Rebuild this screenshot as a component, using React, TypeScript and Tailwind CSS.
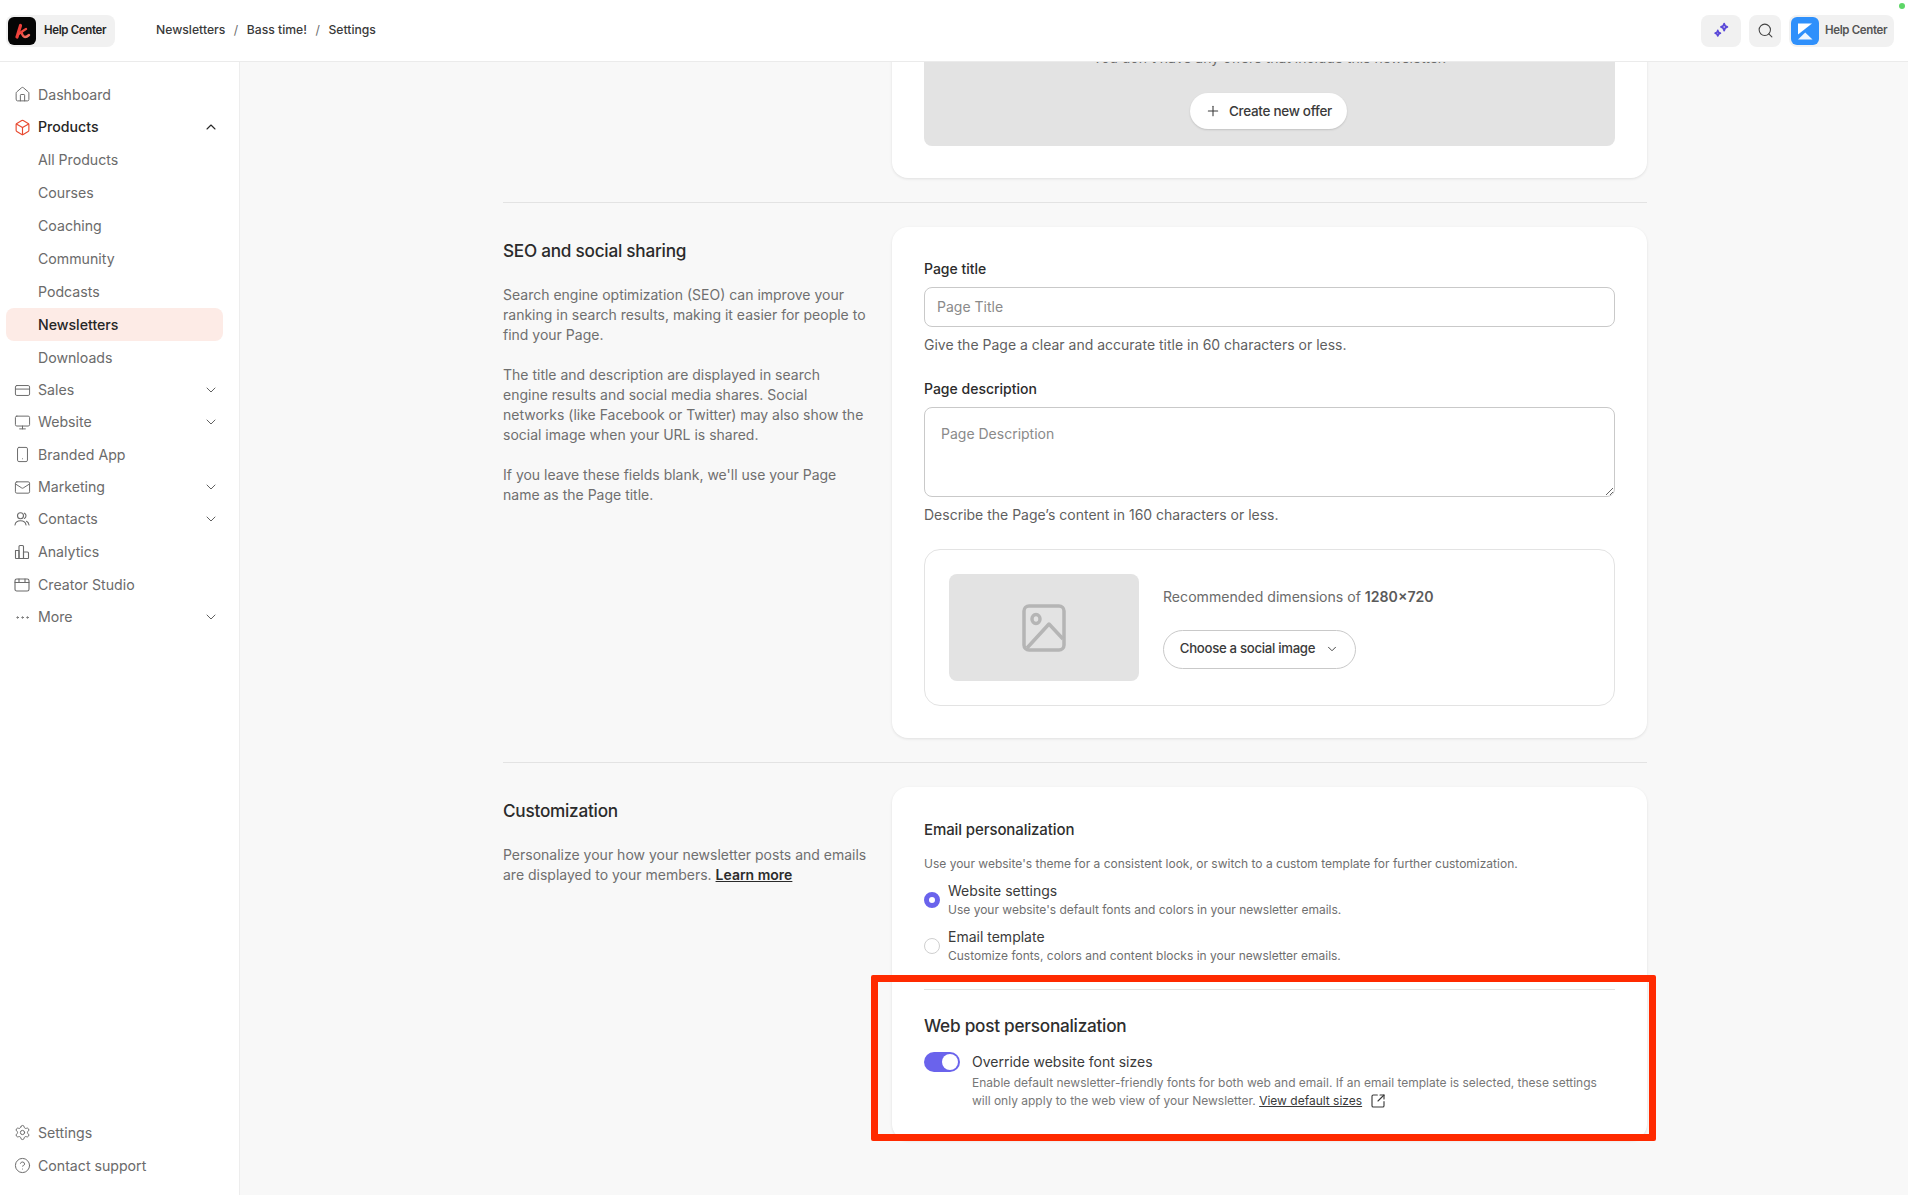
import React from 'react';
import {
  Box,
  ChevronDown,
  ChevronUp,
  CircleHelp,
  CreditCard,
  Ellipsis,
  House,
  Mail,
  Monitor,
  Plus,
  Search,
  Settings,
  Smartphone,
  SquareArrowOutUpRight,
} from 'lucide-react';

const inter = 'font-[Inter,sans-serif]';

function ContactsIcon() {
  return (
    <svg viewBox="0 0 16 16" className="w-[16px] h-[16px]" fill="none" stroke="currentColor" strokeWidth="1.1" strokeLinecap="round">
      <circle cx="6.5" cy="4.8" r="3" />
      <path d="M10.5 2.2a3 3 0 0 1 0 5.2" />
      <path d="M1 14c.4-2.6 2.6-4.2 5.5-4.2S11.600 11.400 12 14" />
      <path d="M12.500 10.300c1.300.6 2.200 1.900 2.500 3.700" />
    </svg>
  );
}

function AnalyticsIcon() {
  return (
    <svg viewBox="0 0 16 16" className="w-[16px] h-[16px]" fill="none" stroke="currentColor" strokeWidth="1.1" strokeLinejoin="round">
      <path d="M1.500 6.500h3.500v8H2a.5.5 0 0 1-.5-.5z" />
      <path d="M5 2.500a1 1 0 0 1 1-1h2.500a1 1 0 0 1 1 1v12H5z" />
      <path d="M9.500 8h4a1 1 0 0 1 1 1v5a.5.5 0 0 1-.5.5H9.500z" />
    </svg>
  );
}

function StudioIcon() {
  return (
    <svg viewBox="0 0 16 16" className="w-[16px] h-[16px]" fill="none" stroke="currentColor" strokeWidth="1.1" strokeLinecap="round">
      <rect x="1" y="2" width="14" height="12" rx="1.800" />
      <path d="M1 5.500h14M5 2v3.500M11 2v3.500" />
    </svg>
  );
}

function KajabiMark() {
  return (
    <svg viewBox="0 0 28 28" className="w-[28px] h-[28px]" fill="none" strokeLinecap="round">
      <defs>
        <linearGradient id="kmark" x1="0" y1="0" x2="1" y2="1">
          <stop offset="0" stopColor="#f0413a" />
          <stop offset="1" stopColor="#f47a6a" />
        </linearGradient>
      </defs>
      <rect width="28" height="28" rx="6" fill="#050505" />
      <path d="M12.500 8.500 9 20" stroke="#ee3f3a" strokeWidth="3.200" />
      <path d="M10.500 17c2.500-1.500 4.500-3.500 7.500-5" stroke="#ee4a40" strokeWidth="2.400" />
      <path d="M13.500 15.500c.8 2.500 1.500 4.500 3.500 4.500 1.500 0 2.700-.8 4-2" stroke="url(#kmark)" strokeWidth="2.400" />
    </svg>
  );
}

function SiteMark() {
  return (
    <svg viewBox="0 0 28 28" className="w-[28px] h-[28px]">
      <rect width="28" height="28" rx="6" fill="#2f90fb" />
      <path d="M7 6.500h14L7 17.500z" fill="#fff" />
      <path d="M7 22.500 14.200 15.500l7.300 7z" fill="#fff" opacity="0.92" />
    </svg>
  );
}

function SparkleIcon() {
  return (
    <svg viewBox="0 0 16 16" className="w-[17px] h-[17px]" fill="none" stroke="#5a48d8" strokeWidth="1.700" strokeLinejoin="round">
      <path d="M10.500 1.500c.3 1.900 1 2.700 3 3.200-2 .5-2.700 1.300-3 3.300-.3-2-1-2.800-3-3.300 2-.5 2.700-1.300 3-3.200z" />
      <path d="M4.500 8c.2 1.500.8 2.100 2.400 2.500-1.600.4-2.200 1-2.400 2.500-.2-1.500-.8-2.100-2.400-2.500 1.600-.4 2.200-1 2.400-2.500z" />
    </svg>
  );
}

function PictureIcon() {
  return (
    <svg viewBox="0 0 44 48" className="w-[44px] h-[48px]" fill="none" stroke="#b5b5b5" strokeWidth="3.500" strokeLinejoin="round">
      <rect x="2" y="2" width="40" height="44" rx="5" />
      <ellipse cx="14" cy="15" rx="4" ry="4.500" />
      <path d="M5 44 27 20l14 15" />
    </svg>
  );
}

type NavItem = {
  label: string;
  icon?: React.ReactNode;
  chevron?: 'up' | 'down';
  variant?: 'open' | 'current';
};

const iconClass = 'w-[17px] h-[17px] shrink-0';

const topNav: NavItem[] = [
  { label: 'Dashboard', icon: <House className={iconClass} strokeWidth={1.4} /> },
  { label: 'Products', icon: <Box className={`${iconClass} text-[#e8492f]`} strokeWidth={1.6} />, chevron: 'up', variant: 'open' },
  { label: 'All Products' },
  { label: 'Courses' },
  { label: 'Coaching' },
  { label: 'Community' },
  { label: 'Podcasts' },
  { label: 'Newsletters', variant: 'current' },
  { label: 'Downloads' },
  { label: 'Sales', icon: <CreditCard className={iconClass} strokeWidth={1.4} />, chevron: 'down' },
  { label: 'Website', icon: <Monitor className={iconClass} strokeWidth={1.4} />, chevron: 'down' },
  { label: 'Branded App', icon: <Smartphone className={iconClass} strokeWidth={1.4} /> },
  { label: 'Marketing', icon: <Mail className={iconClass} strokeWidth={1.4} />, chevron: 'down' },
  { label: 'Contacts', icon: <ContactsIcon />, chevron: 'down' },
  { label: 'Analytics', icon: <AnalyticsIcon /> },
  { label: 'Creator Studio', icon: <StudioIcon /> },
  { label: 'More', icon: <Ellipsis className={iconClass} strokeWidth={1.4} />, chevron: 'down' },
];

const bottomNav: NavItem[] = [
  { label: 'Settings', icon: <Settings className={iconClass} strokeWidth={1.4} /> },
  { label: 'Contact support', icon: <CircleHelp className={iconClass} strokeWidth={1.4} /> },
];

function NavRow({ item }: { item: NavItem }) {
  const dark = item.variant === 'open' || item.variant === 'current';
  return (
    <div
      className={`flex items-center mx-[6px] w-[217px] pl-[8px] pr-[4px] rounded-[8px] text-[14.150px] ${
        item.chevron ? 'h-[32px]' : 'h-[33px]'
      } ${dark ? 'text-[#262626] font-medium' : 'text-[#6b6b6b]'} ${item.variant === 'current' ? 'bg-[#fdebe6]' : ''}`}
    >
      <span className="w-[16px] h-[16px] mr-[8px] flex items-center justify-center shrink-0">{item.icon}</span>
      <span className="flex-1">{item.label}</span>
      {item.chevron === 'up' && <ChevronUp className="w-[16px] h-[16px] text-[#262626]" strokeWidth={1.6} />}
      {item.chevron === 'down' && <ChevronDown className="w-[16px] h-[16px] text-[#555]" strokeWidth={1.4} />}
    </div>
  );
}

function Pill({ children, className = '' }: { children: React.ReactNode; className?: string }) {
  return <div className={`h-[32px] rounded-[8px] bg-[#f1f1f1] flex items-center ${className}`}>{children}</div>;
}

function Header() {
  return (
    <header className="relative h-[62px] shrink-0 bg-white border-b border-[#ebebeb] flex items-center pl-[6px] pr-[14px] z-10">
      <Pill className="w-[109px] pl-[2px]">
        <KajabiMark />
        <span className="ml-[8px] text-[11.500px] font-semibold tracking-[-0.35px] text-[#262626]">Help Center</span>
      </Pill>
      <nav className="ml-[41px] flex items-center text-[12.200px] font-medium text-[#3a3a3a]">
        <span>Newsletters</span>
        <span className="mx-[8.500px] font-normal text-[#6b6b6b]">/</span>
        <span>Bass time!</span>
        <span className="mx-[8.500px] font-normal text-[#6b6b6b]">/</span>
        <span>Settings</span>
      </nav>
      <div className="ml-auto flex items-center gap-[8px]">
        <Pill className="w-[40px] justify-center">
          <SparkleIcon />
        </Pill>
        <Pill className="w-[32px] justify-center">
          <Search className="w-[17px] h-[17px] text-[#444]" strokeWidth={1.5} />
        </Pill>
        <Pill className="w-[105px] pl-[2px]">
          <SiteMark />
          <span className="ml-[6px] text-[11.500px] font-semibold tracking-[-0.35px] text-[#555]">Help Center</span>
        </Pill>
      </div>
      <span className="absolute right-[3px] top-[3px] w-[6px] h-[6px] rounded-full bg-[#5dd667]" />
    </header>
  );
}

function Section({ title, intro, children }: { title: string; intro: React.ReactNode; children: React.ReactNode }) {
  return (
    <section className="grid grid-cols-[365px_755px] gap-x-[24px]">
      <div className="pt-[9px]">
        <h2 className="text-[17.200px] leading-[30px] font-medium tracking-[-0.25px] text-[#2b2b2b]">{title}</h2>
        <div className="mt-[19px] text-[14px] leading-[20px] text-[#6f6f6f] flex flex-col gap-[20px]">{intro}</div>
      </div>
      {children}
    </section>
  );
}

function Card({ children, className = '' }: { children: React.ReactNode; className?: string }) {
  return (
    <div className={`bg-white rounded-[16px] shadow-[0_1px_3px_rgba(0,0,0,0.1)] px-[32px] ${className}`}>{children}</div>
  );
}

function Divider() {
  return <div className="h-px bg-[#e3e3e3] my-[24px]" />;
}

function RadioRow({ label, hint, checked }: { label: string; hint: string; checked?: boolean }) {
  return (
    <div className="flex items-center h-[38px]">
      <span
        className={`w-[16px] h-[16px] rounded-full shrink-0 ${
          checked ? 'border-[5px] border-[#6a63ec]' : 'border border-[#cfcfcf]'
        }`}
      />
      <div className="ml-[8px]">
        <div className="text-[14px] leading-[19px] text-[#3a3a3a]">{label}</div>
        <div className="text-[12px] leading-[19px] text-[#6f6f6f]">{hint}</div>
      </div>
    </div>
  );
}

export default function App() {
  return (
    <div className={`h-screen flex flex-col overflow-hidden bg-[#f8f8f8] ${inter}`}>
      <Header />
      <div className="flex flex-1 min-h-0">
        <aside className="w-[240px] shrink-0 bg-white border-r border-[#ededed] flex flex-col justify-between pt-[16px] pb-[13px]">
          <div>
            {topNav.map((item) => (
              <NavRow key={item.label} item={item} />
            ))}
          </div>
          <div>
            {bottomNav.map((item) => (
              <NavRow key={item.label} item={item} />
            ))}
          </div>
        </aside>

        <main className="flex-1 min-w-0 overflow-hidden relative">
          <div className="w-[1144px] ml-[263px] -mt-[80px]">
            {/* offers section, scrolled mostly out of view */}
            <div className="grid grid-cols-[365px_755px] gap-x-[24px]">
              <div />
              <Card className="py-[32px]">
                <div className="bg-[#e3e3e3] rounded-[8px] pt-[32px] pb-[17px] flex flex-col items-center">
                  <p className="text-[14px] leading-[24px] text-[#6b6b6b]">You don't have any offers that include this newsletter.</p>
                  <button className="mt-[23px] h-[36px] w-[157px] rounded-full bg-white shadow-[0_1px_2px_rgba(0,0,0,0.15)] flex items-center justify-center gap-[8px] text-[13.500px] font-medium tracking-[-0.3px] text-[#3a3a3a] -ml-[2px]">
                    <Plus className="w-[16px] h-[16px]" strokeWidth={1.6} />
                    Create new offer
                  </button>
                </div>
              </Card>
            </div>

            <Divider />

            <Section
              title="SEO and social sharing"
              intro={
                <>
                  <p>Search engine optimization (SEO) can improve your ranking in search results, making it easier for people to find your Page.</p>
                  <p>The title and description are displayed in search engine results and social media shares. Social networks (like Facebook or Twitter) may also show the social image when your URL is shared.</p>
                  <p>If you leave these fields blank, we'll use your Page name as the Page title.</p>
                </>
              }
            >
              <Card className="pt-[32px] pb-[32px]">
                <label className="block text-[14px] leading-[20px] font-medium text-[#2b2b2b]">Page title</label>
                <input
                  placeholder="Page Title"
                  className="mt-[8px] block w-full h-[40px] rounded-[8px] border border-[#c9c9c9] px-[12px] pb-[1px] text-[14px] placeholder:text-[#8a8a8a] outline-none"
                />
                <p className="mt-[8px] text-[14px] leading-[20px] text-[#5f5f5f]">Give the Page a clear and accurate title in 60 characters or less.</p>

                <label className="block mt-[24px] text-[14px] leading-[20px] font-medium text-[#2b2b2b]">Page description</label>
                <textarea
                  placeholder="Page Description"
                  className="mt-[8px] block w-full h-[90px] rounded-[8px] border border-[#c9c9c9] px-[16px] py-[16px] text-[14px] leading-[20px] placeholder:text-[#8a8a8a] outline-none"
                />
                <p className="mt-[8px] text-[14px] leading-[20px] text-[#5f5f5f]">Describe the Page’s content in 160 characters or less.</p>

                <div className="mt-[24px] h-[157px] rounded-[16px] border border-[#e3e3e3] pl-[24px] flex items-center">
                  <div className="w-[190px] h-[107px] rounded-[8px] bg-[#e3e3e3] flex items-center justify-center">
                    <PictureIcon />
                  </div>
                  <div className="ml-[24px]">
                    <p className="text-[14.100px] leading-[20px] text-[#6b6b6b]">
                      Recommended dimensions of <span className="font-semibold text-[#5a5a5a]">1280×720</span>
                    </p>
                    <button className="mt-[23px] h-[39px] w-[193px] rounded-full border border-[#c9c9c9] flex items-center justify-center gap-[10px] text-[13.200px] font-medium tracking-[-0.3px] text-[#3a3a3a]">
                      Choose a social image
                      <ChevronDown className="w-[14px] h-[14px]" strokeWidth={1.6} />
                    </button>
                  </div>
                </div>
              </Card>
            </Section>

            <Divider />

            <Section
              title="Customization"
              intro={
                <p>
                  Personalize your how your newsletter posts and emails are displayed to your members.{' '}
                  <a className="font-semibold text-[#2b2b2b] underline">Learn more</a>
                </p>
              }
            >
              <Card className="pt-[32px] h-[353px]">
                <h3 className="text-[15px] leading-[22px] font-medium tracking-[-0.1px] text-[#2e2e2e]">Email personalization</h3>
                <p className="mt-[13px] text-[12px] leading-[20px] text-[#6f6f6f]">Use your website's theme for a consistent look, or switch to a custom template for further customization.</p>
                <div className="mt-[7px]">
                  <RadioRow checked label="Website settings" hint="Use your website's default fonts and colors in your newsletter emails." />
                  <div className="h-[8px]" />
                  <RadioRow label="Email template" hint="Customize fonts, colors and content blocks in your newsletter emails." />
                </div>
                <div className="mt-[24px] h-px bg-[#e3e3e3]" />
                <h3 className="mt-[23px] text-[17.200px] leading-[26px] font-medium tracking-[-0.25px] text-[#2e2e2e]">Web post personalization</h3>
                <div className="mt-[13px] flex">
                  <span className="w-[36px] h-[20px] rounded-full bg-[#6a63ec] flex items-center justify-end pr-[2px] shrink-0">
                    <span className="w-[16px] h-[16px] rounded-full bg-white" />
                  </span>
                  <div className="ml-[12px]">
                    <div className="text-[14px] leading-[20px] text-[#3a3a3a]">Override website font sizes</div>
                    <p className="mt-[2px] text-[12px] leading-[18px] text-[#777]">
                      Enable default newsletter-friendly fonts for both web and email. If an email template is selected, these settings will only apply to the web view of your Newsletter.{' '}
                      <a className="text-[#3a3a3a] underline">View default sizes</a>
                      <SquareArrowOutUpRight className="inline w-[16px] h-[16px] ml-[8px] text-[#3a3a3a] align-[-4px]" strokeWidth={1.7} />
                    </p>
                  </div>
                </div>
              </Card>
            </Section>
          </div>

          {/* annotation drawn over the screenshot */}
          <div className="absolute left-[631px] top-[913px] w-[785px] h-[166px] border-[7px] border-[#ff2a00] rounded-[2px] pointer-events-none" />
        </main>
      </div>
    </div>
  );
}
